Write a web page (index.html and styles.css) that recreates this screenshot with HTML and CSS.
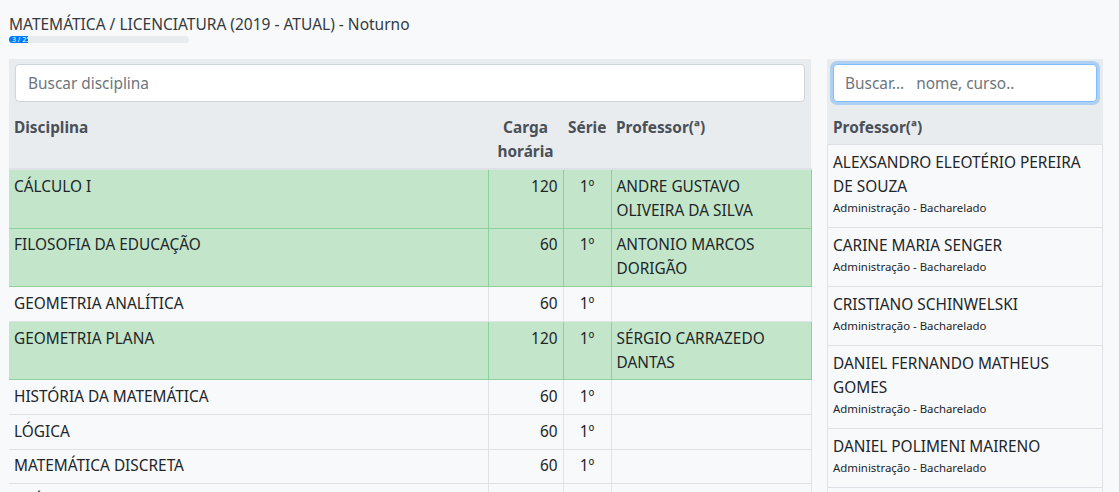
FILE: index.html
```html
<!DOCTYPE html>
<html lang="pt-BR">
<head>
<meta charset="utf-8">
<title>Disciplinas</title>
<link rel="stylesheet" href="styles.css">
</head>
<body>
<div class="page">
  <div class="title">MATEMÁTICA / LICENCIATURA (2019 - ATUAL) - Noturno</div>
  <div class="progress"><div class="progress-bar" style="width: 19px">3 / 25</div></div>
  <div class="main">
    <div class="left">
      <div class="search"><input class="form-control" type="text" placeholder="Buscar disciplina"></div>
      <table class="table">
        <colgroup><col class="c1"><col class="c2"><col class="c3"><col class="c4"></colgroup>
        <thead>
          <tr><th class="tl">Disciplina</th><th class="tc">Carga horária</th><th class="tc">Série</th><th class="tl">Professor(ª)</th></tr>
        </thead>
        <tbody>
          <tr class="ok"><td>CÁLCULO I</td><td class="num">120</td><td class="tc">1º</td><td>ANDRE GUSTAVO OLIVEIRA DA SILVA</td></tr>
          <tr class="ok"><td>FILOSOFIA DA EDUCAÇÃO</td><td class="num">60</td><td class="tc">1º</td><td>ANTONIO MARCOS DORIGÃO</td></tr>
          <tr><td>GEOMETRIA ANALÍTICA</td><td class="num">60</td><td class="tc">1º</td><td></td></tr>
          <tr class="ok"><td>GEOMETRIA PLANA</td><td class="num">120</td><td class="tc">1º</td><td>SÉRGIO CARRAZEDO DANTAS</td></tr>
          <tr><td>HISTÓRIA DA MATEMÁTICA</td><td class="num">60</td><td class="tc">1º</td><td></td></tr>
          <tr><td>LÓGICA</td><td class="num">60</td><td class="tc">1º</td><td></td></tr>
          <tr><td>MATEMÁTICA DISCRETA</td><td class="num">60</td><td class="tc">1º</td><td></td></tr>
          <tr><td>PRÁTICA DE ENSINO</td><td class="num">60</td><td class="tc">1º</td><td></td></tr>
        </tbody>
      </table>
    </div>
    <div class="right">
      <div class="search"><input class="form-control focus" type="text" placeholder="Buscar...   nome, curso.."></div>
      <div class="list-head">Professor(ª)</div>
      <ul class="list">
        <li><div class="name">ALEXSANDRO ELEOTÉRIO PEREIRA DE SOUZA</div><div class="sub">Administração - Bacharelado</div></li>
        <li><div class="name">CARINE MARIA SENGER</div><div class="sub">Administração - Bacharelado</div></li>
        <li><div class="name">CRISTIANO SCHINWELSKI</div><div class="sub">Administração - Bacharelado</div></li>
        <li><div class="name">DANIEL FERNANDO MATHEUS GOMES</div><div class="sub">Administração - Bacharelado</div></li>
        <li><div class="name">DANIEL POLIMENI MAIRENO</div><div class="sub">Administração - Bacharelado</div></li>
        <li><div class="name">DANIELA SOUZA</div><div class="sub">Administração - Bacharelado</div></li>
      </ul>
    </div>
  </div>
</div>
</body>
</html>
```
FILE: styles.css
```css
* { box-sizing: border-box; }
html, body { margin: 0; padding: 0; height: 100%; overflow: hidden; }
body {
  background: #f8f9fa;
  font-family: "Noto Sans", "Open Sans", sans-serif;
  font-size: 15.4px;
  line-height: 24px;
  color: #212529;
}
.page { padding: 12px 16px 0 9px; }
.title { font-size: 15.5px; line-height: 24px; color: #343a40; }
.progress {
  width: 180px; height: 7px;
  background: #e9ecef; border-radius: 4px; overflow: hidden;
}
.progress-bar {
  height: 7px; background: #007bff; color: #fff;
  font-size: 7px; line-height: 7px; white-space: nowrap; overflow: hidden;
  padding-left: 3px;
}
.main { display: flex; gap: 16px; margin-top: 16px; align-items: flex-start; }
.left { width: 802px; background: #e9ecef; }
.right { width: 276px; background: #e9ecef; }
.search { padding: 5px 6px 7px; }
.form-control {
  display: block; width: 100%; height: 38px;
  padding: 6px 12px; font: inherit; font-size: 15.4px; color: #495057;
  background: #fff; border: 1px solid #ced4da; border-radius: 4px; outline: none;
}
.form-control::placeholder { color: #6c757d; }
.form-control.focus { border-color: #80bdff; box-shadow: 0 0 0 3px rgba(0,123,255,.25); padding-left: 11px; }
.table { width: 100%; border-collapse: collapse; table-layout: fixed; }
.c1 { width: 479px; } .c2 { width: 75px; } .c3 { width: 48px; } .c4 { width: 200px; }
.table th {
  padding: 7px 5px 3px; font-weight: 700; color: #495057; vertical-align: top;
  background: #e9ecef; border-bottom: 2px solid #dee2e6; height: 60px;
}
.table td {
  padding: 4.8px 5px 4.8px; vertical-align: top; background: #f8f9fa;
  border: 1px solid #dee2e6; border-top: none;
}
.table tr td:first-child { border-left: none; }
.table tr.ok td { background: #c3e6cb; border-color: #8fd19e; }
.tl { text-align: left; }
.tc { text-align: center; }
.num { text-align: right; }
.list-head {
  padding: 7px 6px 0; font-weight: 700; color: #495057; height: 36px;
  border-bottom: 1px solid #dee2e6;
}
.list { list-style: none; margin: 0; padding: 0; }
.list li {
  background: #f8f9fa; border: 1px solid #dee2e6; border-top: none;
  padding: 6px 5px 10px;
}
.list .name { line-height: 24px; }
.list .sub { font-size: 11.4px; line-height: 18px; }
```
